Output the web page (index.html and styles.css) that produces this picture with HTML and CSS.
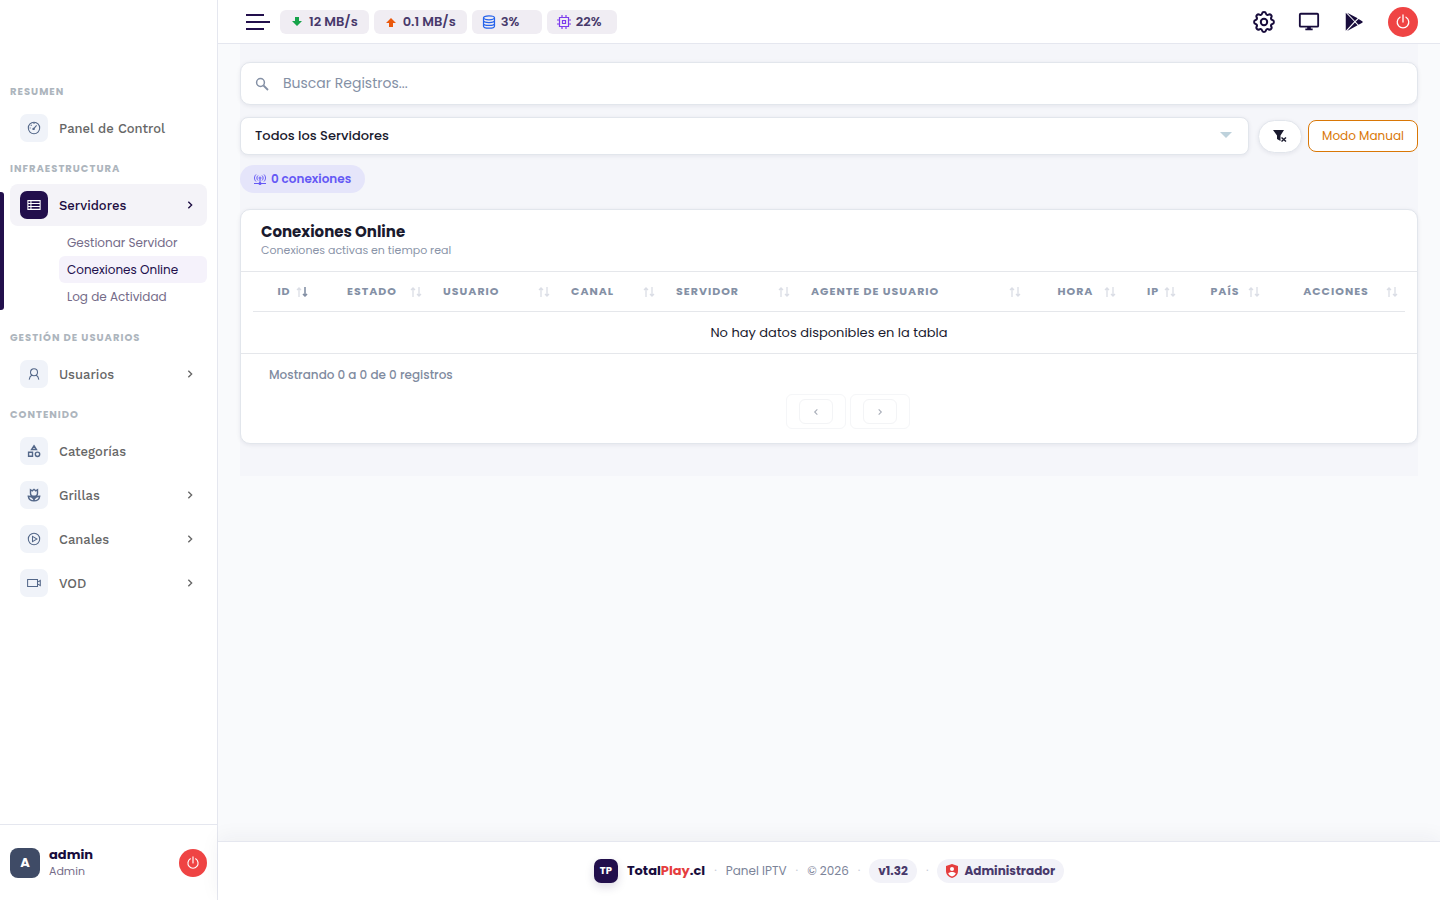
FILE: index.html
```html
<!DOCTYPE html>
<html lang="es">
<head>
    <meta charset="UTF-8">
    <meta name="viewport" content="width=device-width, initial-scale=1.0">
    <title>Conexiones Online - TotalPlay.cl</title>
    <link rel="stylesheet" href="styles.css">
</head>
<body>
    <!-- Shared icons -->
    <svg class="sprite" aria-hidden="true">
        <symbol id="chevron" viewBox="0 0 12 12"><path d="M4 2l4 4-4 4" fill="none" stroke="currentColor" stroke-width="1.6"/></symbol>
        <symbol id="power" viewBox="0 0 16 16"><path d="M8 1v7M5 3.2a5.8 5.8 0 1 0 6 0" fill="none" stroke="currentColor" stroke-width="1.3" stroke-linecap="round"/></symbol>
        <symbol id="sort" viewBox="0 0 12 12">
            <path d="M3 11V2M1 4l2-2 2 2" fill="none" stroke="currentColor" stroke-width="1.3"/>
            <path d="M9 1v9M7 8l2 2 2-2" fill="none" stroke="currentColor" stroke-width="1.3"/>
        </symbol>
    </svg>

    <div class="layout">
        <aside class="sidebar">
            <nav class="menu">
                <h2 class="menu-title">RESUMEN</h2>
                <ul>
                    <li>
                        <a href="#" class="menu-link">
                            <span class="menu-icon"><svg viewBox="0 0 16 16"><circle cx="8" cy="8" r="6.5"/><path d="M7.5 9l3.500-4M8 2v1.500M3 8h1.200M4.300 4.300l1 1"/><circle cx="7.500" cy="9" r=".8"/></svg></span>
                            <span>Panel de Control</span>
                        </a>
                    </li>
                </ul>

                <h2 class="menu-title">INFRAESTRUCTURA</h2>
                <ul>
                    <li class="active">
                        <a href="#" class="menu-link">
                            <span class="menu-icon"><svg viewBox="0 0 16 16"><path d="M1 3h14v10H1zM1 6.300h14M1 9.700h14M4.500 3v10"/></svg></span>
                            <span>Servidores</span>
                            <svg class="arrow"><use href="#chevron"/></svg>
                        </a>
                        <ul class="submenu">
                            <li><a href="#">Gestionar Servidor</a></li>
                            <li><a href="#" class="current">Conexiones Online</a></li>
                            <li><a href="#">Log de Actividad</a></li>
                        </ul>
                    </li>
                </ul>

                <h2 class="menu-title">GESTIÓN DE USUARIOS</h2>
                <ul>
                    <li>
                        <a href="#" class="menu-link">
                            <span class="menu-icon"><svg viewBox="0 0 16 16"><circle cx="8" cy="6" r="4"/><path d="M5.600 9.200C3.800 10.200 2.800 12 2.500 14.500M10.400 9.200c1.800 1 2.800 2.800 3.100 5.300"/></svg></span>
                            <span>Usuarios</span>
                            <svg class="arrow"><use href="#chevron"/></svg>
                        </a>
                    </li>
                </ul>

                <h2 class="menu-title">CONTENIDO</h2>
                <ul>
                    <li>
                        <a href="#" class="menu-link">
                            <span class="menu-icon bold"><svg viewBox="0 0 16 16"><path d="M8 2L10.800 6.300H5.200zM1.800 9.500h4.500V14H1.800z"/><circle cx="12" cy="11.800" r="2.500"/></svg></span>
                            <span>Categorías</span>
                        </a>
                    </li>
                    <li>
                        <a href="#" class="menu-link">
                            <span class="menu-icon bold"><svg viewBox="0 0 16 16"><path d="M4 2l2 1.200L8 1.500l2 1.700L12 2v4a4 3.500 0 0 1-8 0zM8 9.500v5M1.500 9.500C2 13 4.500 14.700 8 14.700S14 13 14.500 9.500C11 9.500 9 11 8 13.500 7 11 5 9.500 1.500 9.500z"/></svg></span>
                            <span>Grillas</span>
                            <svg class="arrow"><use href="#chevron"/></svg>
                        </a>
                    </li>
                    <li>
                        <a href="#" class="menu-link">
                            <span class="menu-icon"><svg viewBox="0 0 16 16"><circle cx="8" cy="8" r="6.500"/><path d="M6.300 5l5 3-5 3z"/></svg></span>
                            <span>Canales</span>
                            <svg class="arrow"><use href="#chevron"/></svg>
                        </a>
                    </li>
                    <li>
                        <a href="#" class="menu-link">
                            <span class="menu-icon"><svg viewBox="0 0 16 16"><path d="M.7 4h11.300v8H.7zM12 7l3.200-2v6L12 9"/></svg></span>
                            <span>VOD</span>
                            <svg class="arrow"><use href="#chevron"/></svg>
                        </a>
                    </li>
                </ul>
            </nav>

            <div class="user">
                <span class="avatar">A</span>
                <div class="user-info">
                    <strong>admin</strong>
                    <span>Admin</span>
                </div>
                <button class="power-btn" type="button" aria-label="Salir"><svg><use href="#power"/></svg></button>
            </div>
        </aside>

        <div class="page">
            <header class="topbar">
                <button class="burger" type="button" aria-label="Menú"><i></i><i></i><i></i></button>
                <div class="stats">
                    <span class="stat"><svg class="green" viewBox="0 0 14 14"><path d="M5 2h4v4h3l-5 5-5-5h3z" fill="currentColor"/></svg>12 MB/s</span>
                    <span class="stat"><svg class="orange" viewBox="0 0 14 14"><path d="M5 12h4V8h3L7 3 2 8h3z" fill="currentColor"/></svg>0.1 MB/s</span>
                    <span class="stat"><svg class="blue" viewBox="0 0 14 14"><g fill="none" stroke="currentColor" stroke-width="1.200"><ellipse cx="7" cy="2.800" rx="5.500" ry="2"/><path d="M1.500 2.800v8.400c0 2.600 11 2.600 11 0V2.800M1.500 5.600c0 2.600 11 2.600 11 0M1.500 8.400c0 2.600 11 2.600 11 0"/></g></svg>3%</span>
                    <span class="stat"><svg class="purple" viewBox="0 0 14 14"><path d="M2.500 2.500h9v9h-9zM5.500 5.500h3v3h-3zM5 0v2.500M9 0v2.500M5 11.500V14M9 11.500V14M0 5h2.500M0 9h2.500M11.500 5H14M11.500 9H14" fill="none" stroke="currentColor" stroke-width="1.200"/></svg>22%</span>
                </div>
                <div class="actions">
                    <a href="#" aria-label="Configuración"><svg viewBox="1 1 22 22"><g fill="none" stroke="currentColor" stroke-width="2" stroke-linejoin="round"><circle cx="12" cy="12" r="3.200"/><path d="M10 3.600c.4-2 3.600-2 4 0a1.700 1.700 0 0 0 2.600 1.100c1.700-1.100 3.800 1 2.700 2.700a1.700 1.700 0 0 0 1.100 2.600c2 .4 2 3.600 0 4a1.700 1.700 0 0 0-1.100 2.600c1.100 1.700-1 3.800-2.700 2.700a1.700 1.700 0 0 0-2.600 1.100c-.4 2-3.600 2-4 0a1.700 1.700 0 0 0-2.600-1.100c-1.700 1.100-3.800-1-2.700-2.700A1.700 1.700 0 0 0 3.600 14c-2-.4-2-3.600 0-4a1.700 1.700 0 0 0 1.100-2.600C3.600 5.700 5.700 3.600 7.400 4.700A1.700 1.700 0 0 0 10 3.600z"/></g></svg></a>
                    <a href="#" aria-label="Monitor"><svg viewBox="0 0 24 24"><rect x="2" y="3" width="20" height="14" rx="1" fill="none" stroke="currentColor" stroke-width="2"/><path d="M10 17h4v2h2v2H8v-2h2z" fill="currentColor"/></svg></a>
                    <a href="#" aria-label="Aplicación"><svg viewBox="0 0 24 24"><path d="M3 2l9.300 9.500L3 21.500zM4.500 2l11.500 5.800-3 3zM4.500 21.700L16 15.600l-3-3zM17 8.800l4 2.300q1.200.8 0 1.600l-4 2.200-3.200-3.200z" fill="currentColor"/></svg></a>
                    <button class="power-btn large" type="button" aria-label="Cerrar sesión"><svg><use href="#power"/></svg></button>
                </div>
            </header>

            <main class="content">
                <div class="panel">
                    <label class="search">
                        <svg viewBox="0 0 14 14"><circle cx="5.500" cy="5.500" r="3.900" fill="none" stroke="currentColor" stroke-width="1.500"/><path d="M8.500 8.500l4.500 4.500" stroke="currentColor" stroke-width="1.800"/></svg>
                        <input type="text" placeholder="Buscar Registros..." aria-label="Buscar Registros">
                    </label>

                    <div class="filters">
                        <div class="select-box">
                            <select aria-label="Servidor">
                                <option>Todos los Servidores</option>
                            </select>
                            <svg viewBox="0 0 12 6"><path d="M0 0h12L6 6z" fill="currentColor"/></svg>
                        </div>
                        <button class="clear-btn" type="button" aria-label="Limpiar filtros"><svg viewBox="0 0 16 16"><path d="M1 2h11L8.500 7.500V13L5 11V7.500z" fill="currentColor"/><path d="M9.500 9.500l4.500 4M14 9.500l-4.500 4" stroke="currentColor" stroke-width="1.500"/></svg></button>
                        <button class="manual-btn" type="button">Modo Manual</button>
                    </div>

                    <span class="badge">
                        <svg viewBox="0 0 12 12"><g fill="none" stroke="currentColor"><circle cx="6" cy="5" r="1"/><path d="M6 6v5M0 10.500h12M4 7.500c-1.500-1.500-1.500-3.500 0-5M8 7.500c1.500-1.500 1.500-3.500 0-5M2 8.500C0 6.500 0 3.500 2 1.500M10 8.500c2-2 2-5 0-7"/></g><circle cx="6" cy="10.500" r="1.500" fill="currentColor"/></svg>
                        0 conexiones
                    </span>

                    <section class="card">
                        <div class="card-header">
                            <h1>Conexiones Online</h1>
                            <p>Conexiones activas en tiempo real</p>
                        </div>
                        <div class="table-wrap">
                            <table>
                                <colgroup>
                                    <col class="col-id"><col class="col-state"><col class="col-user"><col class="col-channel"><col class="col-server">
                                    <col class="col-agent"><col class="col-time"><col class="col-ip"><col class="col-country"><col class="col-actions">
                                </colgroup>
                                <thead>
                                    <tr>
                                        <th class="center">ID<svg><use href="#sort"/></svg><svg class="sort-down" viewBox="0 0 12 12"><path d="M9 1v9M7 8l2 2 2-2" fill="none" stroke="currentColor" stroke-width="1.500"/></svg></th>
                                        <th class="center">ESTADO<svg><use href="#sort"/></svg></th>
                                        <th>USUARIO<svg><use href="#sort"/></svg></th>
                                        <th>CANAL<svg><use href="#sort"/></svg></th>
                                        <th>SERVIDOR<svg><use href="#sort"/></svg></th>
                                        <th>AGENTE DE USUARIO<svg><use href="#sort"/></svg></th>
                                        <th class="center">HORA<svg><use href="#sort"/></svg></th>
                                        <th class="center">IP<svg><use href="#sort"/></svg></th>
                                        <th class="center">PAÍS<svg><use href="#sort"/></svg></th>
                                        <th class="center">ACCIONES<svg><use href="#sort"/></svg></th>
                                    </tr>
                                </thead>
                                <tbody>
                                    <tr>
                                        <td colspan="10">No hay datos disponibles en la tabla</td>
                                    </tr>
                                </tbody>
                            </table>
                        </div>
                        <div class="card-footer">
                            <p>Mostrando 0 a 0 de 0 registros</p>
                            <ul class="pagination">
                                <li><button type="button" disabled aria-label="Anterior"><svg class="prev"><use href="#chevron"/></svg></button></li>
                                <li><button type="button" disabled aria-label="Siguiente"><svg><use href="#chevron"/></svg></button></li>
                            </ul>
                        </div>
                    </section>
                </div>
            </main>

            <footer class="footer">
                <span class="logo">TP</span>
                <strong class="brand">Total<span>Play</span>.cl</strong>
                <span class="dot">·</span>
                <span>Panel IPTV</span>
                <span class="dot">·</span>
                <span>© 2026</span>
                <span class="dot">·</span>
                <span class="pill">v1.32</span>
                <span class="dot">·</span>
                <span class="pill"><svg viewBox="0 0 12 14"><path d="M6 0l6 2v5c0 3.500-2.500 6-6 7-3.500-1-6-3.500-6-7V2z" fill="#e53e3e"/><circle cx="6" cy="5" r="2" fill="#fff"/><path d="M2.200 9.500C3.500 7.500 8.500 7.500 9.800 9.500 9 11 7.500 12 6 12.500 4.500 12 3 11 2.200 9.500z" fill="#fff"/></svg>Administrador</span>
            </footer>
        </div>
    </div>
</body>
</html>
```
FILE: styles.css
```css
/* General Reset */
* {
    margin: 0;
    padding: 0;
    box-sizing: border-box;
}

body {
    font-family: Poppins, Inter, sans-serif;
    font-size: 13px;
    background-color: #f9fafc;
    color: #1a1a2e;
}

ul {
    list-style: none;
}

a {
    color: inherit;
    text-decoration: none;
}

button,
input,
select {
    font: inherit;
    color: inherit;
    border: none;
    background: none;
}

button {
    cursor: pointer;
}

svg {
    display: block;
    flex: none;
}

.sprite {
    display: none;
}

.layout {
    display: flex;
    min-height: 100vh;
}

/* Sidebar */
.sidebar {
    width: 218px;
    flex: none;
    display: flex;
    flex-direction: column;
    background-color: #fff;
    border-right: 1px solid #e5e7ef;
}

.menu {
    flex: 1;
    padding: 74px 10px 0;
}

.menu-title {
    padding: 10px 0 8px;
    font-size: 10px;
    line-height: 15px;
    font-weight: 700;
    letter-spacing: 1px;
    color: #adb5bd;
}

.menu-link {
    display: flex;
    align-items: center;
    gap: 11px;
    height: 42px;
    margin-bottom: 2px;
    padding: 0 12px 0 10px;
    border-radius: 8px;
    font-family: "Work Sans", Poppins, Inter, sans-serif;
    font-weight: 500;
    color: #666;
}

.menu-icon {
    width: 28px;
    height: 28px;
    display: grid;
    place-items: center;
    border-radius: 7px;
    background-color: #f0f3f9;
    color: #536789;
}

.menu-icon svg {
    width: 14px;
    height: 14px;
    fill: none;
    stroke: currentColor;
    stroke-width: 1.2;
}

.menu-icon.bold svg {
    stroke-width: 1.6;
}

.arrow {
    width: 10px;
    height: 10px;
    margin-left: auto;
}

.active {
    position: relative;
}

.active::before {
    content: "";
    position: absolute;
    left: -10px;
    top: 8px;
    bottom: 0;
    width: 4px;
    border-radius: 0 3px 3px 0;
    background-color: #220f4c;
}

.active .menu-link {
    background-color: #f4f3f8;
    color: #1b0b40;
}

.active .menu-icon {
    background-color: #220f4c;
    color: #fff;
}

.submenu {
    margin: 3px 0 10px 49px;
}

.submenu a {
    display: block;
    padding: 0 8px;
    font-size: 12px;
    line-height: 27px;
    border-radius: 6px;
    color: #746b88;
}

.submenu .current {
    background-color: #f5f2fb;
    color: #220f4c;
}

.user {
    display: flex;
    align-items: center;
    gap: 9px;
    height: 76px;
    padding: 0 10px;
    border-top: 1px solid #e5e7ef;
}

.avatar {
    width: 30px;
    height: 30px;
    display: grid;
    place-items: center;
    border-radius: 8px;
    background-color: #3f4b66;
    color: #fff;
    font-weight: 700;
}

.user-info {
    flex: 1;
    line-height: 17px;
}

.user-info strong {
    display: block;
    color: #180c3c;
}

.user-info span {
    display: block;
    font-size: 11px;
    color: #746b88;
}

.power-btn {
    width: 28px;
    height: 28px;
    display: grid;
    place-items: center;
    border-radius: 50%;
    background-color: #ef4444;
    color: #fff;
}

.power-btn svg {
    width: 14px;
    height: 14px;
}

.power-btn.large {
    width: 30px;
    height: 30px;
}

.power-btn.large svg {
    width: 16px;
    height: 16px;
}

/* Top bar */
.page {
    flex: 1;
    min-width: 0;
    display: flex;
    flex-direction: column;
}

.topbar {
    display: flex;
    align-items: center;
    height: 44px;
    padding: 0 22px 0 28px;
    background-color: #fff;
    border-bottom: 1px solid #e5e7ef;
}

.burger {
    width: 24px;
    display: flex;
    flex-direction: column;
    gap: 5px;
}

.burger i {
    width: 18px;
    height: 2px;
    background-color: #220f4c;
}

.burger i:nth-child(2) {
    width: 24px;
}

.stats {
    display: flex;
    gap: 5px;
    margin-left: 10px;
}

.stat {
    display: flex;
    align-items: center;
    gap: 5px;
    min-width: 70px;
    height: 24px;
    padding: 0 11px 0 10px;
    border-radius: 6px;
    background-color: #f0edf3;
    color: #48396b;
    font-weight: 600;
}

.stat svg {
    width: 14px;
    height: 14px;
}

.green { color: #16a34a; }
.orange { color: #ea580c; }
.blue { color: #2563eb; }
.purple { color: #7c3aed; }

.actions {
    display: flex;
    align-items: center;
    gap: 23px;
    margin-left: auto;
    color: #180c3c;
}

.actions a svg {
    width: 22px;
    height: 22px;
}

/* Content */
.content {
    flex: 1;
    padding: 0 22px;
}

.panel {
    padding: 18px 0 32px;
    background-color: #f5f6fa;
}

.search,
.select-box select,
.clear-btn,
.card {
    background-color: #fff;
    border: 1px solid #e2e6ec;
    box-shadow: 0 1px 4px rgba(30, 30, 60, 0.08);
}

.search {
    display: flex;
    align-items: center;
    gap: 14px;
    height: 43px;
    padding: 0 14px;
    border-radius: 10px;
    color: #8490a5;
}

.search svg {
    width: 14px;
    height: 14px;
}

.search input {
    flex: 1;
    font-size: 14px;
    outline: none;
}

.search input::placeholder {
    color: #8490a5;
}

.filters {
    display: flex;
    align-items: center;
    margin: 12px 0 10px;
}

.select-box {
    flex: 1;
    position: relative;
    margin-right: 9px;
}

.select-box select {
    display: block;
    width: 100%;
    height: 38px;
    padding: 0 14px 2px;
    border-radius: 8px;
    appearance: none;
    font-weight: 500;
}

.select-box svg {
    position: absolute;
    right: 17px;
    top: 15px;
    width: 12px;
    height: 6px;
    color: #bed2dc;
    pointer-events: none;
}

.clear-btn {
    width: 44px;
    height: 33px;
    display: grid;
    place-items: center;
    margin-right: 6px;
    border-radius: 17px;
}

.clear-btn svg {
    width: 16px;
    height: 16px;
}

.manual-btn {
    height: 32px;
    padding: 0 13px;
    border: 1px solid #d97706;
    border-radius: 8px;
    background-color: #fff;
    color: #d97706;
    font-size: 12px;
}

.badge {
    display: flex;
    align-items: center;
    gap: 5px;
    width: fit-content;
    height: 28px;
    margin-bottom: 16px;
    padding: 0 14px;
    border-radius: 14px;
    background-color: #e5e5fa;
    color: #6458f5;
    font-size: 12px;
    font-weight: 600;
}

.badge svg {
    width: 12px;
    height: 12px;
}

/* Connections table */
.card {
    border-radius: 10px;
}

.card-header {
    padding: 12px 20px;
    border-bottom: 1px solid #e5e7eb;
}

.card-header h1 {
    font-size: 15px;
    line-height: 20px;
    font-weight: 700;
}

.card-header p {
    font-size: 11px;
    line-height: 17px;
    color: #8a94a8;
}

.table-wrap {
    padding: 0 12px;
    border-bottom: 1px solid #e5e7eb;
}

table {
    width: 100%;
    table-layout: fixed;
    border-collapse: separate;
    border-spacing: 0;
}

.col-id { width: 62px; }
.col-state { width: 114px; }
.col-user { width: 128px; }
.col-channel { width: 105px; }
.col-server { width: 135px; }
.col-agent { width: 231px; }
.col-time { width: 95px; }
.col-ip { width: 60px; }
.col-country { width: 84px; }
.col-actions { width: 138px; }

th {
    position: relative;
    height: 40px;
    padding: 0 14px;
    border-bottom: 1px solid #e5e7eb;
    font-size: 11px;
    font-weight: 700;
    letter-spacing: 1px;
    text-align: left;
    white-space: nowrap;
    color: #8490a5;
}

th.center {
    text-align: center;
}

th svg {
    position: absolute;
    right: 7px;
    top: 14px;
    width: 12px;
    height: 12px;
    color: #dadde5;
}

th .sort-down {
    color: #8490a5;
}

td {
    height: 41px;
    text-align: center;
}

.card-footer {
    padding: 12px 28px 14px;
}

.card-footer p {
    line-height: 18px;
    font-size: 12px;
    font-weight: 500;
    color: #7f8ba0;
}

.pagination {
    display: flex;
    justify-content: center;
    gap: 4px;
    margin-top: 10px;
    padding-left: 38px;
}

.pagination li {
    padding: 4px 12px;
    border: 1px solid #f5f6f8;
    border-radius: 6px;
}

.pagination button {
    display: grid;
    place-items: center;
    width: 34px;
    height: 25px;
    border: 1px solid #f3f4f6;
    border-radius: 6px;
    color: #a8adb8;
}

.pagination svg {
    width: 8px;
    height: 8px;
}

.prev {
    transform: rotate(180deg);
}

/* Footer */
.footer {
    display: flex;
    align-items: center;
    justify-content: center;
    gap: 9px;
    height: 59px;
    background-color: #fff;
    border-top: 1px solid #e5e7ef;
    box-shadow: 0 -4px 20px rgba(30, 30, 60, 0.05);
    font-size: 12px;
    color: #7c8499;
}

.logo {
    width: 24px;
    height: 24px;
    display: grid;
    place-items: center;
    border-radius: 7px;
    background-color: #220f4c;
    box-shadow: 0 4px 10px rgba(34, 15, 76, 0.15);
    color: #fff;
    font-size: 10px;
    font-weight: 700;
}

.brand {
    font-size: 13px;
    color: #180c3c;
}

.brand span {
    color: #e53e3e;
}

.dot {
    color: #c8cdd8;
}

.pill {
    display: flex;
    align-items: center;
    gap: 6px;
    height: 24px;
    padding: 0 9px;
    border-radius: 12px;
    background-color: #f2f2f8;
    color: #48396b;
    font-weight: 700;
}

.pill svg {
    width: 12px;
    height: 14px;
}
```
